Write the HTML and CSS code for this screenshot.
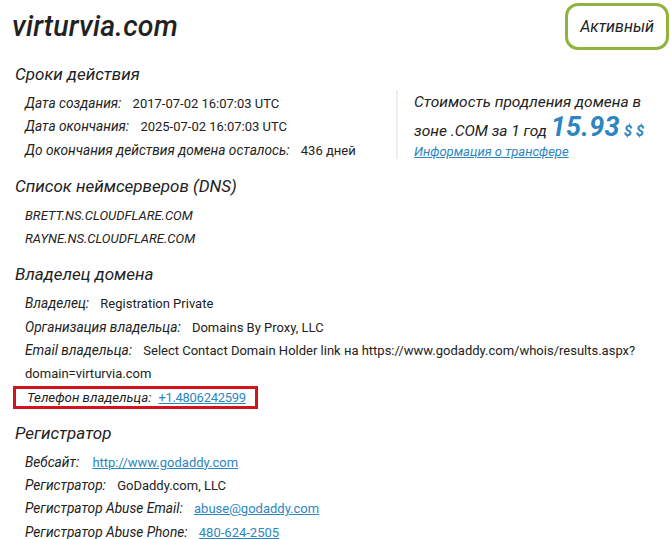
FILE: index.html
```html
<!DOCTYPE html>
<html lang="ru">
<head>
    <meta charset="UTF-8">
    <meta name="viewport" content="width=device-width, initial-scale=1.0">
    <title>virturvia.com</title>
    <link rel="stylesheet" href="styles.css">
</head>
<body>
    <div class="page">
        <div class="head">
            <h1 class="domain">virturvia.com</h1>
            <div class="status">Активный</div>
        </div>

        <h2>Сроки действия</h2>
        <div class="terms">
            <div class="rows">
                <div class="row"><span class="lbl">Дата создания:</span> <span>2017-07-02 16:07:03 UTC</span></div>
                <div class="row"><span class="lbl">Дата окончания:</span> <span>2025-07-02 16:07:03 UTC</span></div>
                <div class="row"><span class="lbl">До окончания действия домена осталось:</span> <span>436 дней</span></div>
            </div>
            <div class="price">
                <div class="price-text">Стоимость продления домена в</div>
                <div class="price-text">зоне .COM за 1 год <span class="sum">15.93</span> <span class="cur">$ $</span></div>
                <a href="#" class="transfer">Информация о трансфере</a>
            </div>
        </div>

        <h2>Список неймсерверов (DNS)</h2>
        <div class="rows">
            <div class="row ns">BRETT.NS.CLOUDFLARE.COM</div>
            <div class="row ns">RAYNE.NS.CLOUDFLARE.COM</div>
        </div>

        <h2>Владелец домена</h2>
        <div class="rows">
            <div class="row"><span class="lbl">Владелец:</span> <span>Registration Private</span></div>
            <div class="row"><span class="lbl">Организация владельца:</span> <span>Domains By Proxy, LLC</span></div>
            <div class="row"><span class="lbl">Email владельца:</span> <span>Select Contact Domain Holder link на https://www.godaddy.com/whois/results.aspx?domain=virturvia.com</span></div>
            <div class="row marked"><span class="lbl">Телефон владельца:</span> <a href="#">+1.4806242599</a></div>
        </div>

        <h2>Регистратор</h2>
        <div class="rows">
            <div class="row"><span class="lbl lbl-wide">Вебсайт:</span> <a href="#">http://www.godaddy.com</a></div>
            <div class="row"><span class="lbl">Регистратор:</span> <span>GoDaddy.com, LLC</span></div>
            <div class="row"><span class="lbl">Регистратор Abuse Email:</span> <a href="#">abuse@godaddy.com</a></div>
            <div class="row"><span class="lbl">Регистратор Abuse Phone:</span> <a href="#">480-624-2505</a></div>
        </div>
    </div>
</body>
</html>
```
FILE: styles.css
```css
body{margin: 0; background: #fff; color: #222; font-family: "Roboto", "Liberation Sans", sans-serif; font-size: 13px;}
.page{padding: 0 4px 0 12px;}
.head{display: flex; justify-content: space-between; align-items: flex-start; padding-top: 3px;}
.domain{margin: 7px 0 0 0; font-size: 28.5px; font-style: italic; font-weight: 500; color: #222; letter-spacing: 0.2px;}
.status{border: 3px solid #8fb33c; border-radius: 13px; padding: 0 12px; height: 41px; line-height: 41px; font-size: 16px; font-style: italic; color: #222; margin-right: -2px;}
h2{margin: 11px 0 0 3px; font-size: 17px; font-style: italic; font-weight: 400; color: #222; line-height: 26px;}
.rows{padding: 5px 0 0 13px;}
.row{line-height: 23.3px;}
.lbl{font-style: italic; font-size: 13.7px; margin-right: 8px;}
.lbl-wide{margin-right: 10px;}
.ns{font-style: italic;}
.row a{color: #2b86c2;}
.marked{display: flex; align-items: center; width: max-content; border: 3px solid #d4141c; margin: 0 0 0 -12px; padding: 0 9px 0 11px; height: 17px;}
.marked .lbl{font-size: 13.3px; margin-right: 7px;}
.marked a{letter-spacing: -0.3px;}
.terms{display: flex; justify-content: space-between; align-items: flex-start;}
.price{border-left: 2px solid #eee; padding: 0 0 0 16px; width: 253px; margin-top: 3px;}
.price-text{font-size: 15.5px; font-style: italic; line-height: 25px;}
.sum{font-size: 27px; font-weight: 700; color: #2b86c2; letter-spacing: 0.3px;}
.cur{font-size: 15px; font-weight: 700; color: #2b86c2;}
.transfer{font-size: 13px; font-style: italic; color: #2b86c2;}
```
